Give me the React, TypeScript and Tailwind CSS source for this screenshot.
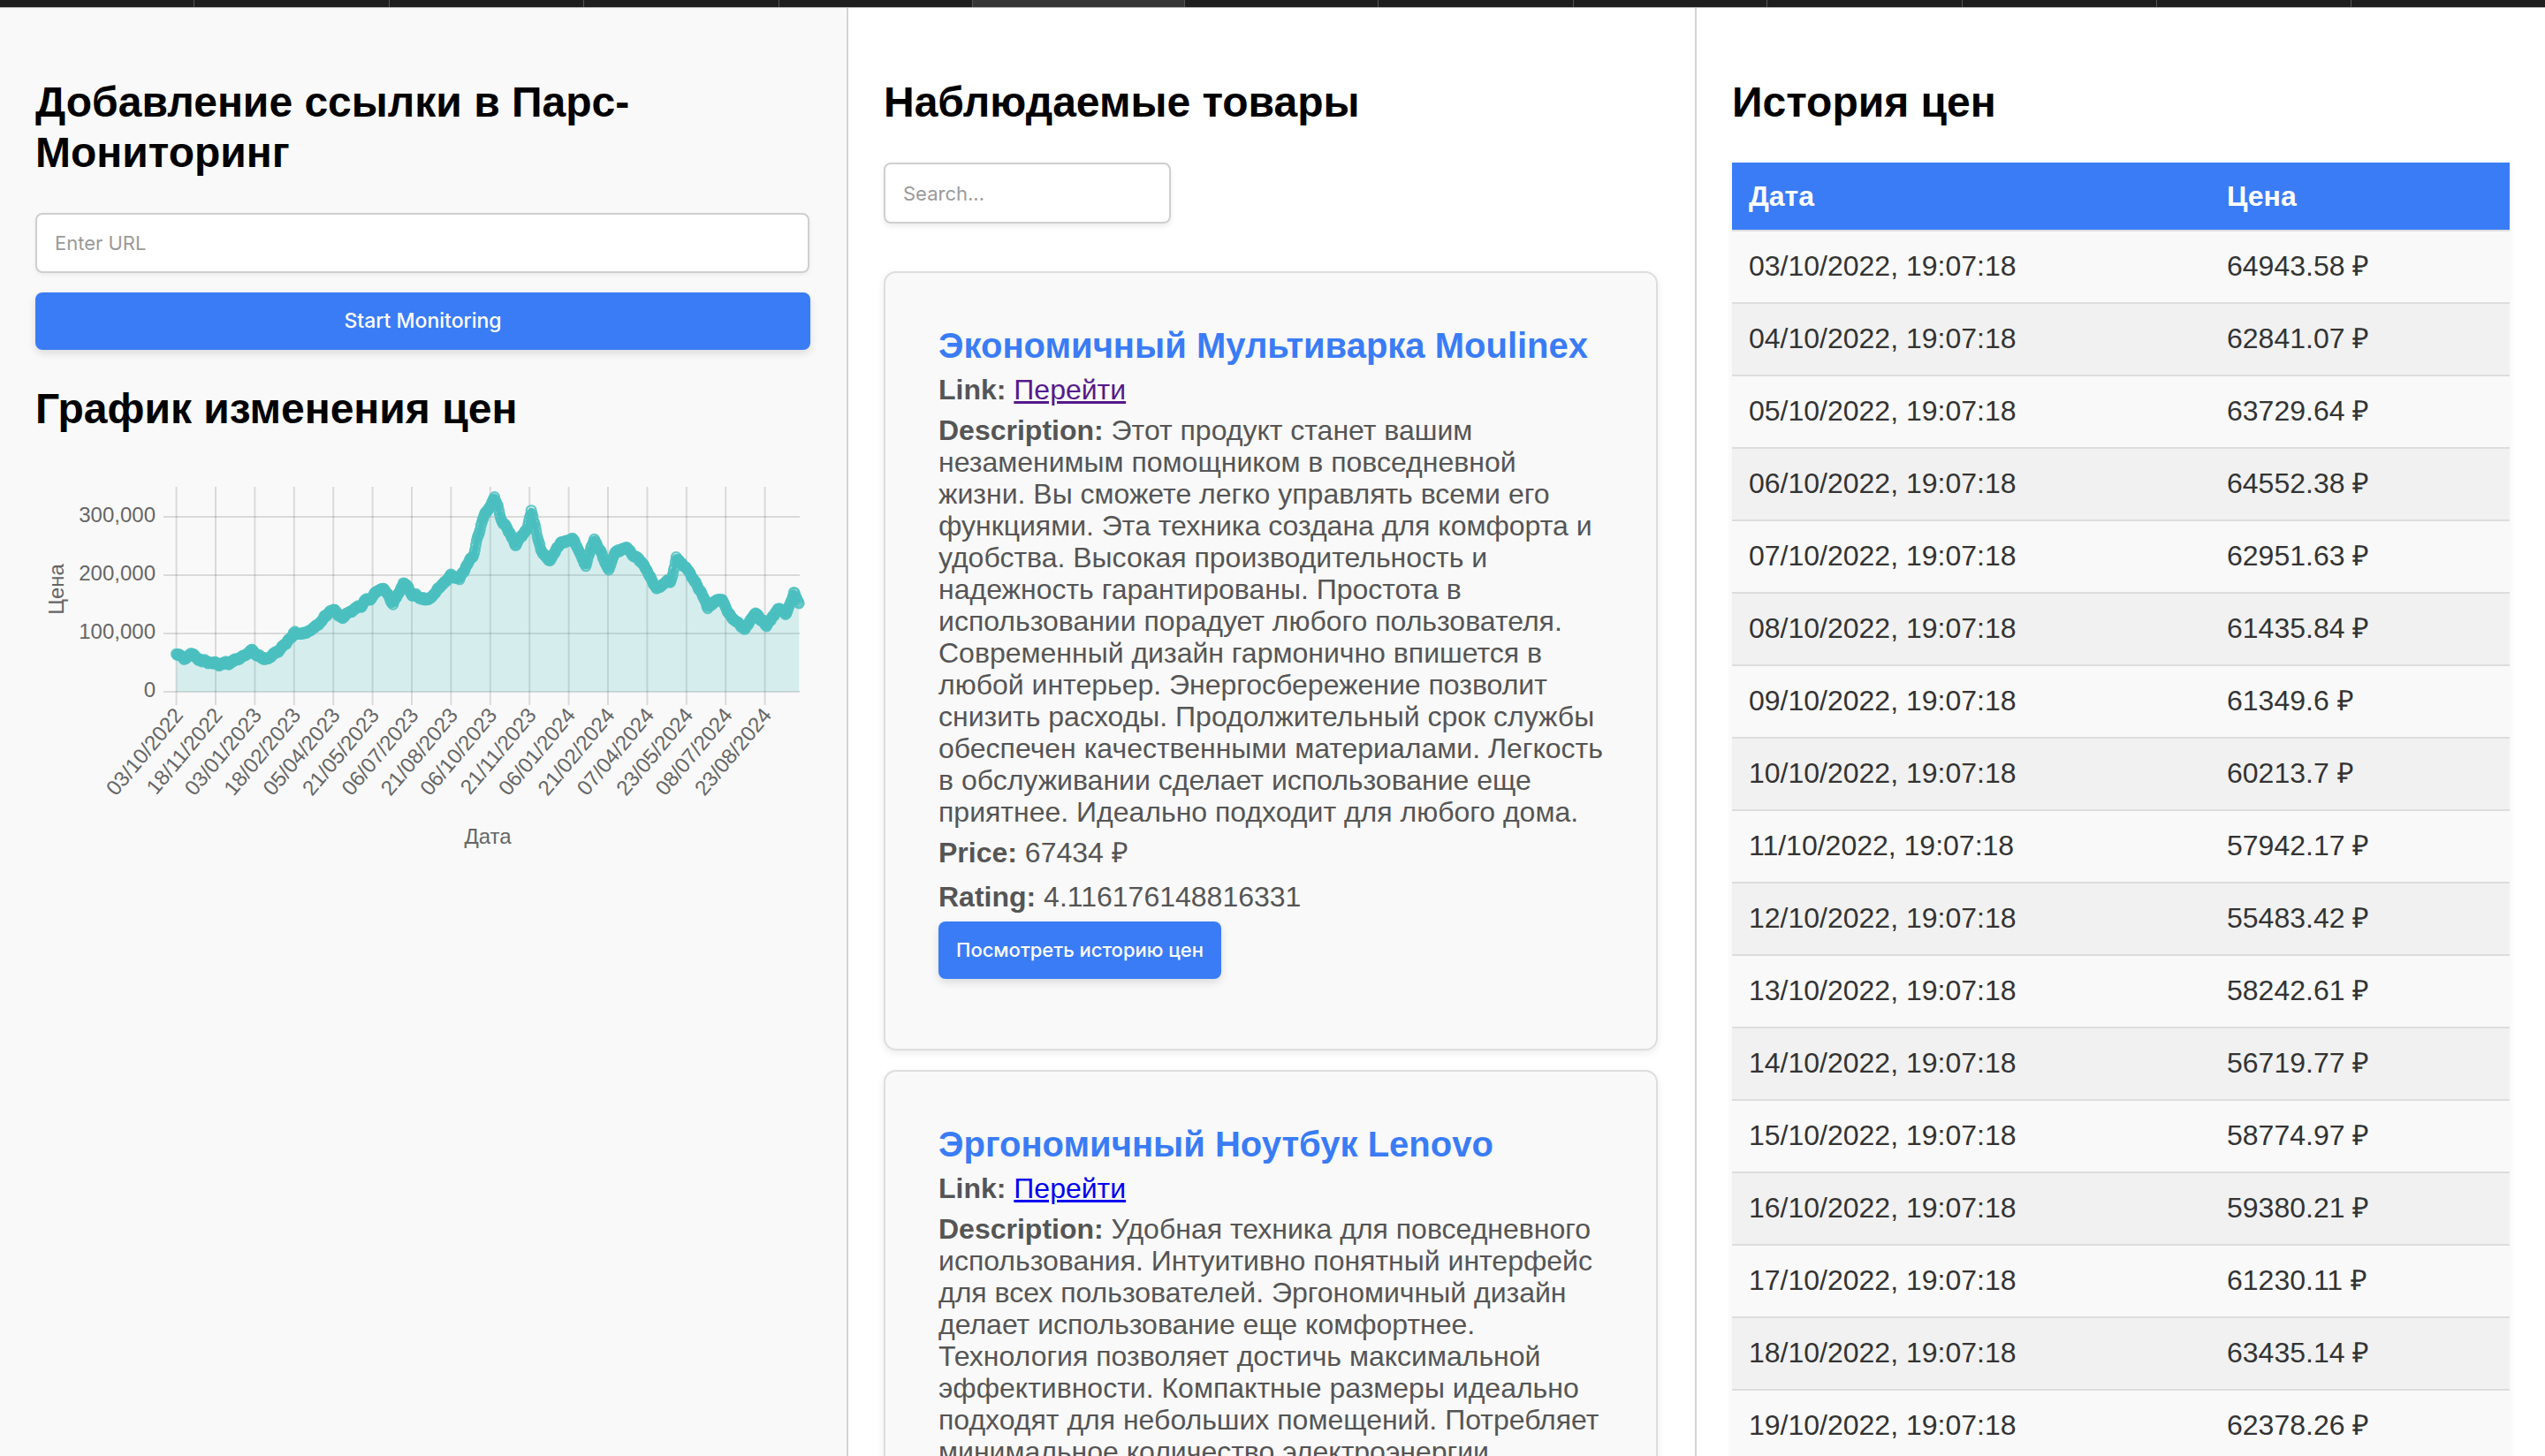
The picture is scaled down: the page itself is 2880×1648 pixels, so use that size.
import React from 'react';

const tabs = [220, 221, 220, 221, 219, 240, 219, 221, 219, 221, 220, 220];

const history: [string, string][] = [
  ['03/10/2022, 19:07:18', '64943.58'],
  ['04/10/2022, 19:07:18', '62841.07'],
  ['05/10/2022, 19:07:18', '63729.64'],
  ['06/10/2022, 19:07:18', '64552.38'],
  ['07/10/2022, 19:07:18', '62951.63'],
  ['08/10/2022, 19:07:18', '61435.84'],
  ['09/10/2022, 19:07:18', '61349.6'],
  ['10/10/2022, 19:07:18', '60213.7'],
  ['11/10/2022, 19:07:18', '57942.17'],
  ['12/10/2022, 19:07:18', '55483.42'],
  ['13/10/2022, 19:07:18', '58242.61'],
  ['14/10/2022, 19:07:18', '56719.77'],
  ['15/10/2022, 19:07:18', '58774.97'],
  ['16/10/2022, 19:07:18', '59380.21'],
  ['17/10/2022, 19:07:18', '61230.11'],
  ['18/10/2022, 19:07:18', '63435.14'],
  ['19/10/2022, 19:07:18', '62378.26'],
  ['20/10/2022, 19:07:18', '60914.52'],
];

// rough shape of the price curve: [day, price]
const keys: [number, number][] = [
  [0, 65000], [11, 58000], [18, 66000], [31, 55000], [54, 47000], [77, 58000], [87, 69000],
  [104, 55000], [124, 75000], [137, 101000], [153, 101000], [170, 124000], [186, 141000],
  [190, 127000], [203, 132000], [229, 164000], [243, 180000], [254, 153000], [266, 186000],
  [276, 170000], [295, 154000], [309, 176000], [322, 198000], [332, 192000], [348, 236000],
  [358, 292000], [373, 334000], [381, 298000], [398, 252000], [411, 280000], [416, 310000],
  [428, 240000], [438, 226000], [451, 256000], [464, 264000], [480, 218000], [490, 262000],
  [507, 208000], [517, 240000], [530, 245000], [547, 218000], [563, 176000], [580, 192000],
  [586, 232000], [603, 202000], [623, 144000], [639, 160000], [652, 122000], [666, 111000],
  [679, 137000], [692, 111000], [705, 143000], [715, 132000], [724, 169000], [730, 150000],
];

function rng(seed: number) {
  return () => {
    seed |= 0;
    seed = (seed + 0x6d2b79f5) | 0;
    let t = Math.imul(seed ^ (seed >>> 15), 1 | seed);
    t = (t + Math.imul(t ^ (t >>> 7), 61 | t)) ^ t;
    return ((t ^ (t >>> 14)) >>> 0) / 4294967296;
  };
}

const data: number[] = (() => {
  const r = rng(42);
  const out: number[] = [];
  let n = 0;
  let k = 0;
  for (let d = 0; d <= 730; d++) {
    while (k < keys.length - 2 && keys[k + 1][0] < d) k++;
    const [d0, v0] = keys[k];
    const [d1, v1] = keys[k + 1];
    const t = Math.min(1, Math.max(0, (d - d0) / (d1 - d0)));
    n = n * 0.75 + (r() - 0.5) * 5000;
    out.push(v0 + (v1 - v0) * t + n);
  }
  history.slice(0, 17).forEach(([, p], i) => (out[i] = parseFloat(p)));
  return out;
})();

const X0 = 199.6;
const PX = 44.4 / 46;
const Y0 = 783;
const PY = 66 / 100000;
const pts = data.map((v, i) => [X0 + i * PX, Y0 - v * PY]);
const linePath = pts.map((p, i) => `${i ? 'L' : 'M'}${p[0].toFixed(1)},${p[1].toFixed(1)}`).join('');
const areaPath = `${linePath}L${pts[pts.length - 1][0].toFixed(1)},${Y0}L${X0},${Y0}Z`;

const xLabels = [
  '03/10/2022', '18/11/2022', '03/01/2023', '18/02/2023', '05/04/2023', '21/05/2023',
  '06/07/2023', '21/08/2023', '06/10/2023', '21/11/2023', '06/01/2024', '21/02/2024',
  '07/04/2024', '23/05/2024', '08/07/2024', '23/08/2024',
];

const PriceChart = () => (
  <svg width={880} height={476} viewBox="40 494 880 476" className="mt-[3px] block">
    {/* grid */}
    {xLabels.map((_, i) => {
      const x = X0 + i * 44.4;
      return <line key={i} x1={x} x2={x} y1={551} y2={798} stroke="rgba(0,0,0,0.12)" strokeWidth={2} />;
    })}
    {[0, 1, 2, 3].map((i) => {
      const y = Y0 - i * 66;
      return <line key={i} x1={185} x2={905} y1={y} y2={y} stroke="rgba(0,0,0,0.12)" strokeWidth={2} />;
    })}
    {/* y ticks */}
    {['0', '100,000', '200,000', '300,000'].map((t, i) => (
      <text key={t} x={176} y={Y0 - i * 66} fontSize={24} fill="#666" textAnchor="end" dominantBaseline="middle">
        {t}
      </text>
    ))}
    {/* x ticks */}
    {xLabels.map((t, i) => {
      const x = X0 + i * 44.4 + 4;
      const y = 806;
      return (
        <text
          key={t}
          x={x}
          y={y}
          fontSize={24}
          fill="#666"
          textAnchor="end"
          dominantBaseline="middle"
          transform={`rotate(-50 ${x} ${y})`}
        >
          {t}
        </text>
      );
    })}
    <text x={552} y={955} fontSize={24} fill="#666" textAnchor="middle">
      Дата
    </text>
    <text x={72} y={667} fontSize={24} fill="#666" textAnchor="middle" transform="rotate(-90 72 667)">
      Цена
    </text>
    {/* series */}
    <path d={areaPath} fill="rgba(75,192,192,0.2)" />
    <path d={linePath} fill="none" stroke="rgb(75,192,192)" strokeWidth={6} strokeLinejoin="round" />
    {pts.map((p, i) => (
      <circle key={i} cx={p[0]} cy={p[1]} r={5.5} fill="rgba(75,192,192,0.2)" stroke="rgba(75,192,192,0.85)" strokeWidth={2} />
    ))}
  </svg>
);

const products = [
  {
    title: 'Экономичный Мультиварка Moulinex',
    visited: true,
    description:
      'Этот продукт станет вашим незаменимым помощником в повседневной жизни. Вы сможете легко управлять всеми его функциями. Эта техника создана для комфорта и удобства. Высокая производительность и надежность гарантированы. Простота в использовании порадует любого пользователя. Современный дизайн гармонично впишется в любой интерьер. Энергосбережение позволит снизить расходы. Продолжительный срок службы обеспечен качественными материалами. Легкость в обслуживании сделает использование еще приятнее. Идеально подходит для любого дома.',
    price: '67434',
    rating: '4.116176148816331',
  },
  {
    title: 'Эргономичный Ноутбук Lenovo',
    visited: false,
    description:
      'Удобная техника для повседневного использования. Интуитивно понятный интерфейс для всех пользователей. Эргономичный дизайн делает использование еще комфортнее. Технология позволяет достичь максимальной эффективности. Компактные размеры идеально подходят для небольших помещений. Потребляет минимальное количество электроэнергии. Надежность и долговечность подтверждены временем. Стильный внешний вид украсит любое пространство.',
    price: '54210',
    rating: '4.52871930264118',
  },
];

const ProductCard = ({ p }: { p: (typeof products)[number] }) => (
  <div className="w-[876px] shrink-0 rounded-[14px] border-2 border-[#dedede] bg-[#f9f9f9] px-[60px] pt-[61px] pb-[79px] shadow-[0_3px_8px_rgba(0,0,0,0.08)]">
    <h3 className="text-[40px] leading-[43px] font-bold text-[#3a7cf5]">{p.title}</h3>
    <p className="mt-[10px] text-[32px] leading-[36px] text-[#555]">
      <span className="font-bold">Link:</span>{' '}
      <a href="#" className={p.visited ? 'text-[#551a8b] underline' : 'text-[#0000ee] underline'}>
        Перейти
      </a>
    </p>
    <p className="mt-[10px] text-[32px] leading-[36px] text-[#555]">
      <span className="font-bold">Description:</span> {p.description}
    </p>
    <p className="mt-[10px] text-[32px] leading-[36px] text-[#555]">
      <span className="font-bold">Price:</span> {p.price} ₽
    </p>
    <p className="mt-[14px] text-[32px] leading-[36px] text-[#555]">
      <span className="font-bold">Rating:</span> {p.rating}
    </p>
    <button className="mt-[10px] h-[65px] rounded-[8px] bg-[#3a7cf5] px-[20px] font-['Inter',sans-serif] text-[22px] font-medium text-white shadow-[0_4px_10px_rgba(0,0,0,0.12)]">
      Посмотреть историю цен
    </button>
  </div>
);

export default function App() {
  return (
    <div className="flex h-[1648px] w-[2880px] flex-col overflow-hidden bg-white font-['Liberation_Sans',Arial,sans-serif]">
      {/* browser tab strip remnant */}
      <div className="flex h-[9px] shrink-0 border-b border-[#b5b5b5] bg-[#1e1e1e]">
        {tabs.map((w, i) => (
          <div
            key={i}
            style={{ width: w }}
            className={i === 5 ? 'h-full border-r border-[#555] bg-[#363636]' : 'h-full border-r border-[#555]'}
          />
        ))}
      </div>

      <div className="flex min-h-0 flex-1">
        {/* Left column: add link + chart */}
        <div className="w-[960px] shrink-0 overflow-hidden border-r-2 border-[#d4d4d4] bg-[#f9f9f9] px-[40px] pt-[78px]">
          <h2 className="text-[48px] leading-[57px] font-bold text-black">Добавление ссылки в Парс-Мониторинг</h2>
          <input
            placeholder="Enter URL"
            className="mt-[40px] block h-[68px] w-[876px] rounded-[8px] border-2 border-[#cfcfcf] bg-white px-[20px] font-['Inter',sans-serif] text-[22px] shadow-[0_2px_5px_rgba(0,0,0,0.06)] outline-none placeholder:text-[#9a9a9a]"
          />
          <button className="mt-[22px] block h-[65px] w-[877px] rounded-[8px] bg-[#3a7cf5] font-['Inter',sans-serif] text-[23px] font-medium text-white shadow-[0_4px_10px_rgba(0,0,0,0.12)]">
            Start Monitoring
          </button>
          <h2 className="mt-[38px] text-[48px] leading-[57px] font-bold text-black">График изменения цен</h2>
          <PriceChart />
        </div>

        {/* Middle column: watched products */}
        <div className="w-[960px] shrink-0 overflow-hidden border-r-2 border-[#d4d4d4] bg-white px-[40px] pt-[78px]">
          <h2 className="text-[48px] leading-[57px] font-bold text-black">Наблюдаемые товары</h2>
          <input
            placeholder="Search..."
            className="mt-[40px] block h-[69px] w-[325px] rounded-[8px] border-2 border-[#cfcfcf] bg-white px-[20px] font-['Inter',sans-serif] text-[22px] shadow-[0_3px_6px_rgba(0,0,0,0.08)] outline-none placeholder:text-[#9a9a9a]"
          />
          <div className="mt-[54px] flex flex-col gap-[22px]">
            {products.map((p) => (
              <ProductCard key={p.title} p={p} />
            ))}
          </div>
        </div>

        {/* Right column: price history */}
        <div className="flex-1 overflow-hidden bg-white px-[40px] pt-[78px]">
          <h2 className="text-[48px] leading-[57px] font-bold text-black">История цен</h2>
          <div className="mt-[40px] w-[880px] shadow-[0_2px_8px_rgba(0,0,0,0.06)]">
            <div className="grid h-[76px] grid-cols-[541px_1fr] items-center bg-[#3a7cf5] text-[32px] leading-[36px] font-bold text-white">
              <div className="pl-[19px]">Дата</div>
              <div className="pl-[19px]">Цена</div>
            </div>
            {history.map(([date, price], i) => (
              <div
                key={date}
                className={
                  i % 2 === 0
                    ? 'grid h-[82px] grid-cols-[541px_1fr] items-center border-t-2 border-[#dddddd] bg-[#f9f9f9] pb-[3px] text-[32px] leading-[36px] text-[#333]'
                    : 'grid h-[82px] grid-cols-[541px_1fr] items-center border-t-2 border-[#dddddd] bg-[#f1f1f1] pb-[3px] text-[32px] leading-[36px] text-[#333]'
                }
              >
                <div className="pl-[19px]">{date}</div>
                <div className="pl-[19px]">{price} ₽</div>
              </div>
            ))}
          </div>
        </div>
      </div>
    </div>
  );
}
